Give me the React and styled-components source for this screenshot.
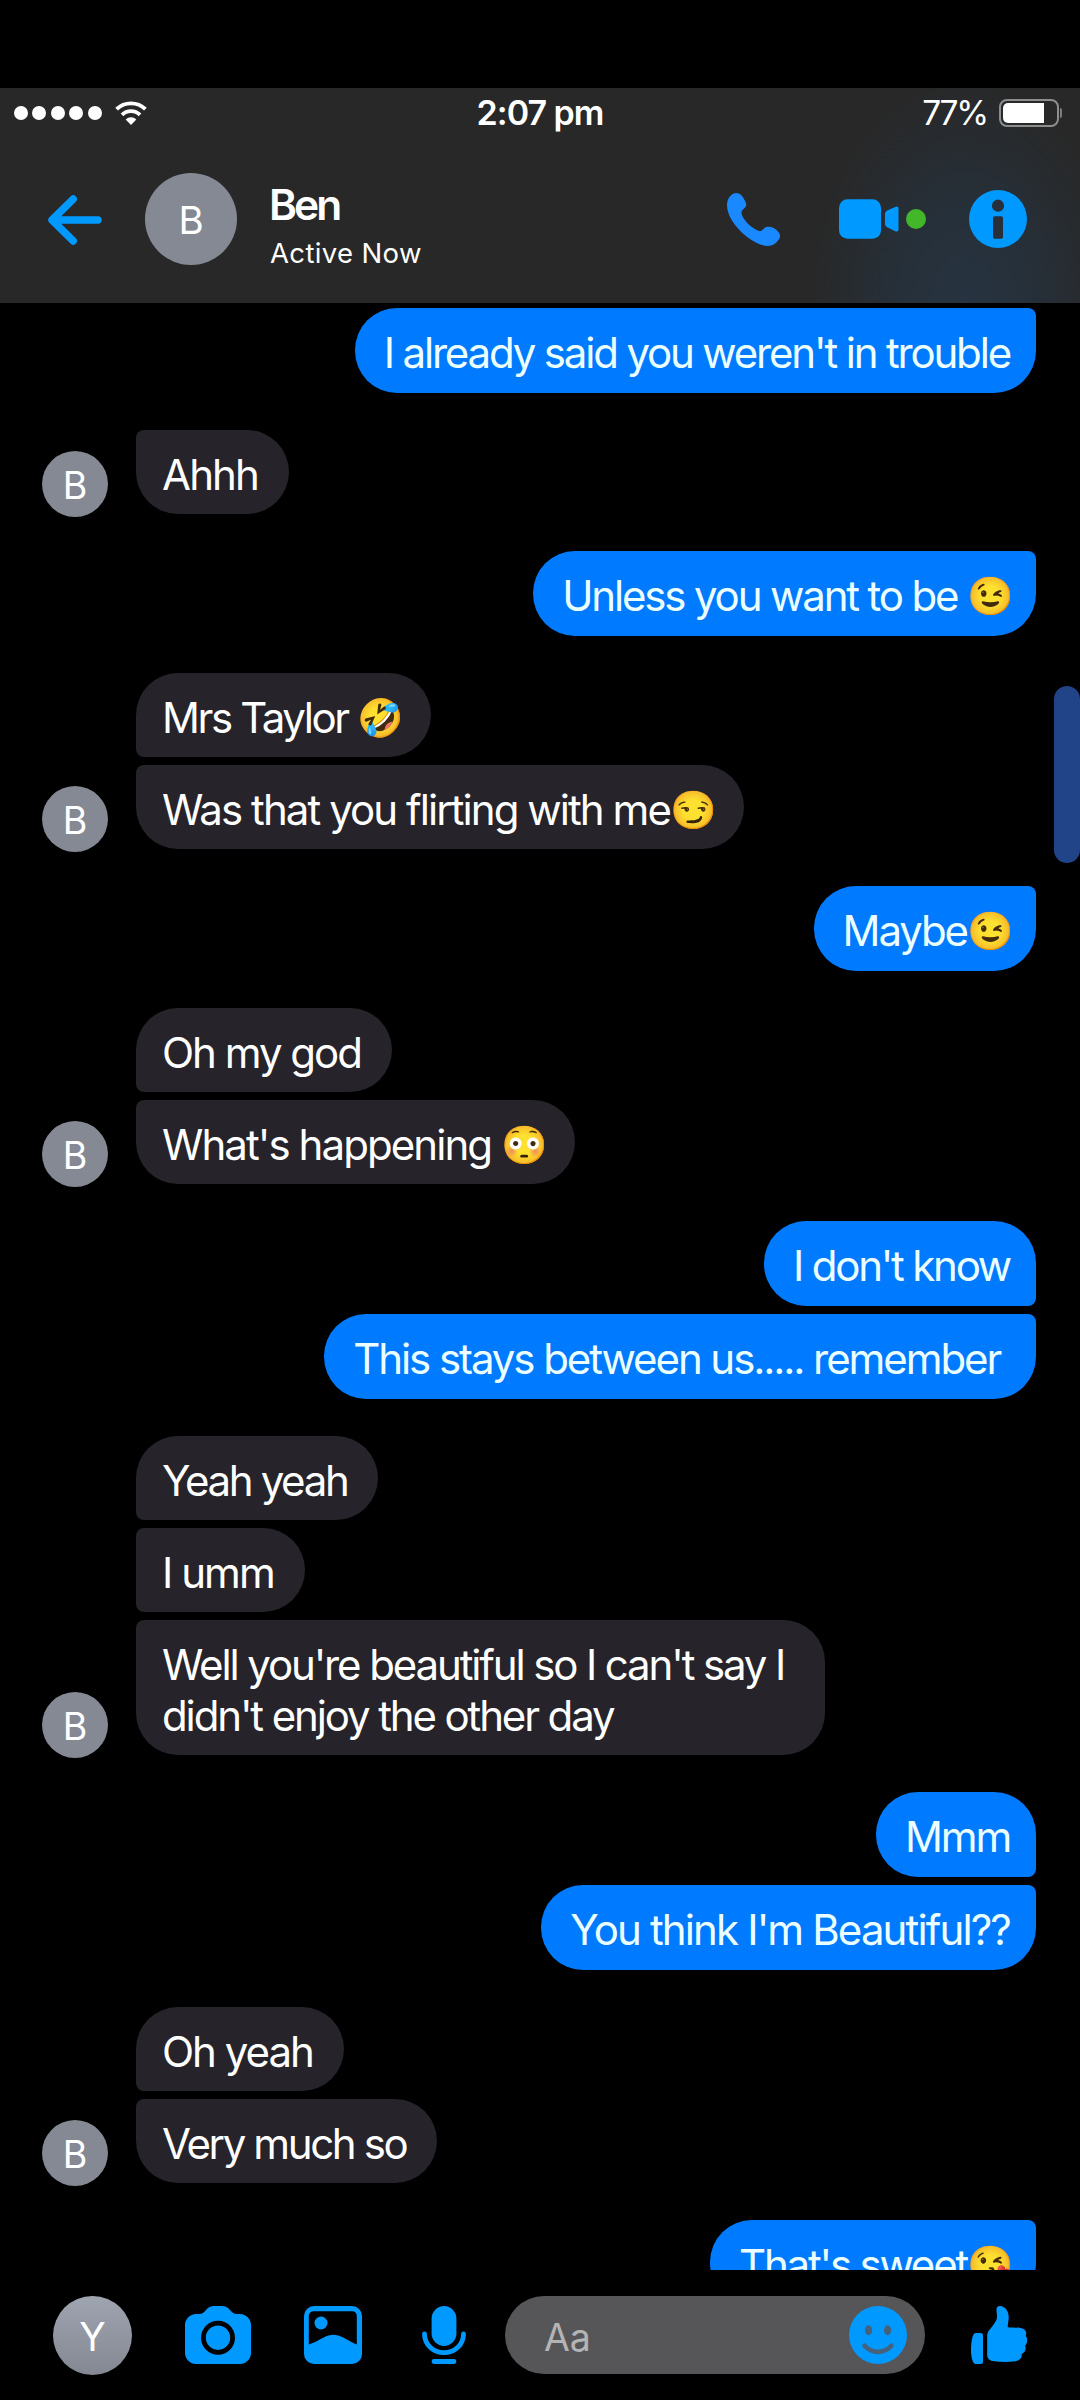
import React from "react";
import styled, { createGlobalStyle } from "styled-components";

const GlobalStyle = createGlobalStyle`
  body {
    margin: 0;
    background: #000;
  }

  * {
    box-sizing: border-box;
  }
`;

const Screen = styled.div`
  display: flex;
  flex-direction: column;
  width: 1080px;
  height: 2400px;
  padding-top: 88px;
  overflow: hidden;
  background: #000;
  color: #fff;
  font-family: Inter, "Liberation Sans", sans-serif;
`;

const Header = styled.header`
  flex: none;
  height: 215px;
  background:
    radial-gradient(
      ellipse 155px 225px at 965px 215px,
      #263340 0%,
      #26303a 40%,
      rgba(40, 40, 40, 0) 100%
    ),
    #282828;
`;

const StatusBar = styled.div`
  display: grid;
  grid-template-columns: 1fr auto 1fr;
  align-items: center;
  height: 50px;
  padding: 0 18px 0 14px;
`;

const Signal = styled.div`
  display: flex;
  align-items: center;
  gap: 4.4px;
`;

const SignalDot = styled.span`
  width: 14px;
  height: 14px;
  border-radius: 50%;
  background: #fff;
`;

const WifiIcon = styled.svg`
  width: 32px;
  height: 24px;
  margin-left: 9px;
`;

const Clock = styled.div`
  padding-left: 4px;
  font-size: 34px;
  font-weight: 600;
  letter-spacing: -1px;
  line-height: 50px;
`;

const Power = styled.div`
  display: flex;
  justify-content: flex-end;
  align-items: center;
  font-size: 33.5px;
  letter-spacing: -2.2px;
  line-height: 50px;
`;

const Battery = styled.div`
  width: 60px;
  height: 28px;
  margin-left: 12px;
  padding: 2px;
  border: 2px solid #8d8d8d;
  border-radius: 8px;
`;

const BatteryLevel = styled.div`
  width: 41px;
  height: 100%;
  border-radius: 5px 0 0 5px;
  background: #fff;
`;

const BatteryTip = styled.span`
  width: 2px;
  height: 10px;
  margin-left: 1px;
  border-radius: 0 2px 2px 0;
  background: #7d7d7d;
`;

const Nav = styled.nav`
  display: flex;
  align-items: center;
  height: 162px;
  padding: 0 53px 0 48px;
`;

const Avatar = styled.div`
  display: flex;
  flex: none;
  align-items: center;
  justify-content: center;
  width: ${(props) => props.$size}px;
  height: ${(props) => props.$size}px;
  padding-top: 3px;
  border-radius: 50%;
  background: ${(props) => props.$background || "#858993"};
  font-size: ${(props) => props.$font || 38}px;
  line-height: 1;
`;

const ContactAvatar = styled(Avatar)`
  margin-left: 43px;
`;

const Contact = styled.div`
  display: flex;
  flex-direction: column;
  gap: 12px;
  padding-top: 13px;
  margin-left: 33px;
`;

const ContactName = styled.div`
  font-size: 42.5px;
  font-weight: 600;
  letter-spacing: -3px;
  line-height: 42px;
  margin-left: -1px;
`;

const ContactStatus = styled.div`
  font-size: 27.5px;
  letter-spacing: 0.35px;
  line-height: 30px;
`;

const Icon = styled.svg`
  flex: none;
  width: ${(props) => props.$w}px;
  height: ${(props) => props.$h}px;
  fill: ${(props) => props.$color || "#0099ff"};
`;

const BackIcon = styled(Icon)`
  margin-top: 2px;
`;

const Actions = styled.div`
  display: flex;
  align-items: center;
  margin-left: auto;
`;

const VideoCall = styled.div`
  display: flex;
  align-items: center;
  gap: 7px;
  margin: 0 43px 0 59px;
`;

const OnlineDot = styled.span`
  width: 20px;
  height: 20px;
  border-radius: 50%;
  background: #43b72a;
`;

const Thread = styled.main`
  position: relative;
  display: flex;
  flex: none;
  flex-direction: column;
  gap: 37px;
  height: 1967px;
  padding: 5px 44px 0 42px;
  overflow: hidden;
`;

const Group = styled.section`
  display: flex;
  flex: none;
  align-items: flex-end;
  justify-content: ${(props) => (props.$mine ? "flex-end" : "flex-start")};
`;

const AvatarSlot = styled.div`
  margin: 0 28px -3px 0;
`;

const Bubbles = styled.div`
  display: flex;
  flex-direction: column;
  align-items: ${(props) => (props.$mine ? "flex-end" : "flex-start")};
  gap: 8px;
`;

const Bubble = styled.div`
  max-width: 689px;
  padding: 19px 31px 14px 26px;
  border-radius: ${(props) => (props.$joinTop ? 8 : 42)}px 42px 42px
    ${(props) => (props.$joinBottom ? 8 : 42)}px;
  background: #26232a;
  font-size: 42px;
  letter-spacing: ${(props) => props.$tracking}px;
  line-height: 51px;
  white-space: pre-wrap;
`;

const MyBubble = styled(Bubble)`
  max-width: 720px;
  padding: 19px 26px 15px 29px;
  border-radius: 42px ${(props) => (props.$joinTop ? 8 : 42)}px
    ${(props) => (props.$joinBottom ? 8 : 42)}px 42px;
  background: #007aff;
  color: #ecffff;
`;

const Emoji = styled.span`
  display: inline-block;
  width: 40px;
  height: 40px;
  margin: -10px 0 -10px 3px;
  font-family: "Noto Color Emoji", sans-serif;
  font-size: 37.5px;
  letter-spacing: 0;
  line-height: 40px;
  text-indent: -3px;
  vertical-align: 2px;
  white-space: nowrap;
`;

const ScrollThumb = styled.div`
  position: absolute;
  top: 383px;
  right: 0;
  width: 26px;
  height: 177px;
  border-radius: 13px;
  background: #214387;
`;

const Composer = styled.footer`
  display: flex;
  flex: none;
  align-items: center;
  height: 130px;
  padding-left: 53px;
`;

const ToolIcon = styled(Icon)`
  margin-left: ${(props) => props.$gap}px;
`;

const MessageInput = styled.div`
  display: flex;
  align-items: center;
  justify-content: space-between;
  width: 420px;
  height: 78px;
  margin-left: 39px;
  padding: 0 18px 0 39px;
  border-radius: 39px;
  background: #565658;
`;

const Placeholder = styled.span`
  padding-top: 5px;
  color: #b4b4b5;
  font-size: 37.5px;
  line-height: 50px;
`;

const conversation = [
  {
    mine: true,
    messages: [
      { text: "I already said you weren't in trouble", tracking: -2.17 }
    ]
  },
  { messages: [{ text: "Ahhh", tracking: -1.85 }] },
  {
    mine: true,
    messages: [{ text: "Unless you want to be ", emoji: "😉", tracking: -2.15 }]
  },
  {
    messages: [
      { text: "Mrs Taylor ", emoji: "🤣", tracking: -2.4 },
      { text: "Was that you flirting with me", emoji: "😏", tracking: -1.93 }
    ]
  },
  { mine: true, messages: [{ text: "Maybe", emoji: "😉", tracking: -2.1 }] },
  {
    messages: [
      { text: "Oh my god", tracking: -2 },
      { text: "What's happening ", emoji: "😳", tracking: -1.93 }
    ]
  },
  {
    mine: true,
    messages: [
      { text: "I don't know", tracking: -2.22 },
      { text: "This stays between us..... remember ", tracking: -2.07 }
    ]
  },
  {
    messages: [
      { text: "Yeah yeah", tracking: -2.35 },
      { text: "I umm", tracking: -1.95 },
      {
        text: "Well you're beautiful so I can't say I didn't enjoy the other day",
        tracking: -2.13
      }
    ]
  },
  {
    mine: true,
    messages: [
      { text: "Mmm", tracking: -2.2 },
      { text: "You think I'm Beautiful??", tracking: -1.86 }
    ]
  },
  {
    messages: [
      { text: "Oh yeah", tracking: -2 },
      { text: "Very much so", tracking: -2.38 }
    ]
  },
  {
    mine: true,
    messages: [{ text: "That's sweet", emoji: "😘", tracking: -2.2 }]
  }
];

const MessageGroup = ({ mine, messages }) => {
  const Item = mine ? MyBubble : Bubble;
  const last = messages.length - 1;
  return (
    <Group $mine={mine}>
      {!mine && (
        <AvatarSlot>
          <Avatar $size={66} $font={37.5}>
            B
          </Avatar>
        </AvatarSlot>
      )}
      <Bubbles $mine={mine}>
        {messages.map(({ text, emoji, tracking }, i) => (
          <Item
            key={text}
            $tracking={tracking}
            $joinTop={i > 0 || last === 0}
            $joinBottom={i < last}
          >
            {text}
            {emoji && <Emoji>{emoji}</Emoji>}
          </Item>
        ))}
      </Bubbles>
    </Group>
  );
};

const App = () => {
  return (
    <>
      <GlobalStyle />
      <Screen>
        <Header>
          <StatusBar>
            <Signal>
              <SignalDot />
              <SignalDot />
              <SignalDot />
              <SignalDot />
              <SignalDot />
              <WifiIcon viewBox="0 0 32 24" fill="none">
                <path
                  d="M1.6 8.2a20.5 20.5 0 0 1 28.8 0M7 13.9a12.7 12.7 0 0 1 18 0"
                  stroke="#fff"
                  strokeWidth="3.8"
                />
                <path d="M16 24l-5.3-5.6a7.4 7.4 0 0 1 10.6 0Z" fill="#fff" />
              </WifiIcon>
            </Signal>
            <Clock>2:07 pm</Clock>
            <Power>
              77%
              <Battery>
                <BatteryLevel />
              </Battery>
              <BatteryTip />
            </Power>
          </StatusBar>
          <Nav>
            <BackIcon $w={54} $h={50} viewBox="0 0 54 50">
              <path
                d="M50 25H4M25.3 4L4 25l21.3 21"
                fill="none"
                stroke="#0099ff"
                strokeWidth="7.4"
                strokeLinecap="round"
                strokeLinejoin="round"
              />
            </BackIcon>
            <ContactAvatar $size={92} $font={38.5}>
              B
            </ContactAvatar>
            <Contact>
              <ContactName>Ben</ContactName>
              <ContactStatus>Active Now</ContactStatus>
            </Contact>
            <Actions>
              <Icon
                $w={53}
                $h={53}
                $color="#1a88ff"
                viewBox="0 0 154 159"
                preserveAspectRatio="none"
              >
                <path d="M0 36C0 18 12 0 27 0c13 0 19 11 27 27 4 9 1 14-3 18-6 6-10 8-9 16 2 14 20 36 40 48 10 6 16 7 20 3 6-6 9-11 17-11 14 0 24 6 31 17 6 9 5 14 1 21-8 13-18 20-34 20C80 159 0 95 0 36Z" />
              </Icon>
              <VideoCall>
                <Icon $w={60} $h={42} viewBox="0 0 60 42">
                  <rect y="1.3" width="42" height="39.5" rx="8.5" />
                  <path d="M46 16c0-1.6.8-2.6 2.2-3.4l8.6-3.8c1.6-.6 2.7.2 2.7 1.8v21c0 1.6-1.1 2.4-2.7 1.8l-8.6-4.2c-1.4-.8-2.2-1.8-2.2-3.4Z" />
                </Icon>
                <OnlineDot />
              </VideoCall>
              <Icon $w={58} $h={58} viewBox="0 0 58 58">
                <circle cx="29" cy="29" r="29" />
                <circle cx="29" cy="15.7" r="6.1" fill="#27303a" />
                <rect
                  x="24"
                  y="26.3"
                  width="10"
                  height="22.4"
                  rx="1.6"
                  fill="#27303a"
                />
              </Icon>
            </Actions>
          </Nav>
        </Header>

        <Thread>
          {conversation.map((group, i) => (
            <MessageGroup key={i} {...group} />
          ))}
          <ScrollThumb />
        </Thread>

        <Composer>
          <Avatar
            $size={79}
            $font={39}
            $background="linear-gradient(#9fa4b1, #848892)"
          >
            Y
          </Avatar>
          <ToolIcon $w={66} $h={58} $gap={53} viewBox="0 0 66 58">
            <path d="M11 8h3c3 0 5-1.5 7-4 2-2.5 5-4 8-4h8c3 0 6 1.5 8 4 2 2.5 4 4 7 4h3c6 0 11 5 11 11v28c0 6-5 11-11 11H11c-6 0-11-5-11-11V19C0 13 5 8 11 8Z" />
            <circle
              cx="33"
              cy="31.7"
              r="14.6"
              fill="none"
              stroke="#000"
              strokeWidth="4.8"
            />
          </ToolIcon>
          <ToolIcon $w={58} $h={58} $gap={53} viewBox="0 0 58 58">
            <rect width="58" height="58" rx="10" />
            <path
              d="M10 5.3h38c3 0 4.8 2 4.8 4.8v28.5c-5-2-9-4.5-13-6.8-4-2-7.500-3-10.500-3s-6 .8-10 3c-5 2.5-9 5-14.500 6.800V10c0-2.800 2-4.700 5.200-4.700"
              fill="#000"
            />
            <circle cx="17" cy="17" r="6.5" />
          </ToolIcon>
          <ToolIcon $w={44} $h={58} $gap={60} viewBox="0 0 44 58">
            <rect x="9.6" width="24.8" height="40" rx="12.4" />
            <path
              d="M2.5 28c0 10.5 8.5 18.6 19.5 18.6S41.5 38.5 41.5 28M12 55.5h20"
              fill="none"
              stroke="#0099ff"
              strokeWidth="4.8"
              strokeLinecap="round"
            />
          </ToolIcon>
          <MessageInput>
            <Placeholder>Aa</Placeholder>
            <Icon $w={58} $h={58} viewBox="0 0 58 58">
              <circle cx="29" cy="29" r="29" />
              <ellipse cx="19.5" cy="24.2" rx="3.6" ry="5" fill="#45627a" />
              <ellipse cx="38.6" cy="24.2" rx="3.6" ry="5" fill="#45627a" />
              <path
                d="M15.6 39.7c7.5 8.2 19.3 8.2 26.8 0"
                fill="none"
                stroke="#45627a"
                strokeWidth="4.6"
                strokeLinecap="round"
              />
            </Icon>
          </MessageInput>
          <ToolIcon $w={56} $h={58} $gap={46} viewBox="0 0 56 58">
            <path d="M4.5 27h5c1.7 0 2.5 1 2.5 2.5v26c0 1.7-.8 2.5-2.5 2.5h-5C2 58 0 52 0 44s1.5-17 4.5-17Z" />
            <path d="M29 0c5 0 8.7 5 8.7 11 0 4-.9 6.5-1 10.2 5 .6 9 .1 13 .8 4 .7 6.3 3 5.2 7-.2 1 .1 1.7.7 2.5 1.4 2 1 5-1 7.5-.4.6-.5 1.3-.2 2 .8 2.5-.3 5-3 6.5-.6.4-.8 1-.7 1.8.2 4-3.5 6-8.7 6.3-6 .5-13 .3-19-.3-4-.5-6.8-2.5-6.8-6.3V30c0-5 3-6.5 6-11 2.5-3.5 4-5.5 3.8-9-.1-3-.6-5-.5-7C25.5 1 27 0 29 0Z" />
          </ToolIcon>
        </Composer>
      </Screen>
    </>
  );
};

export default App;
